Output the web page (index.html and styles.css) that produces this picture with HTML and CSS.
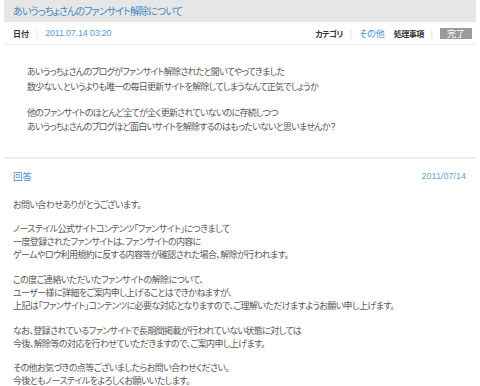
FILE: index.html
```html
<!DOCTYPE html>
<html lang="ja">
<head>
<meta charset="utf-8">
<link rel="stylesheet" href="styles.css">
</head>
<body>
<div class="page">
  <div class="title-bar">あいうっちょさんのファンサイト解除について</div>
  <div class="meta">
    <div class="meta-left">
      <span class="label">日付</span>
      <span class="sep">|</span>
      <span class="date">2011.07.14 03:20</span>
    </div>
    <div class="meta-right">
      <span class="label">カテゴリ</span>
      <span class="sep">|</span>
      <span class="category">その他</span>
      <span class="label">処理事項</span>
      <span class="sep">|</span>
      <span class="badge">完了</span>
    </div>
  </div>
  <div class="question">
    <p>あいうっちょさんのブログがファンサイト解除されたと聞いてやってきました<br>数少ない、というよりも唯一の毎日更新サイトを解除してしまうなんて正気でしょうか</p>
    <p>他のファンサイトのほとんど全てが全く更新されていないのに存続しつつ<br>あいうっちょさんのブログほど面白いサイトを解除するのはもったいないと思いませんか？</p>
  </div>
  <div class="answer">
    <div class="answer-head">
      <span class="answer-label">回答</span>
      <span class="answer-date">2011/07/14</span>
    </div>
    <div class="answer-body">
      <p>お問い合わせありがとうございます。</p>
      <p>ノーステイル公式サイトコンテンツ「ファンサイト」につきまして<br>一度登録されたファンサイトは、ファンサイトの内容に<br>ゲームやロウ利用規約に反する内容等が確認された場合、解除が行われます。</p>
      <p>この度ご連絡いただいたファンサイトの解除について、<br>ユーザー様に詳細をご案内申し上げることはできかねますが、<br>上記は「ファンサイト」コンテンツに必要な対応となりますので、ご理解いただけますようお願い申し上げます。</p>
      <p>なお、登録されているファンサイトで長期間掲載が行われていない状態に対しては<br>今後、解除等の対応を行わせていただきますので、ご案内申し上げます。</p>
      <p>その他お気づきの点等ございましたらお問い合わせください。<br>今後ともノーステイルをよろしくお願いいたします。</p>
    </div>
  </div>
</div>
</body>
</html>
```
FILE: styles.css
```css
html, body {
  margin: 0;
  padding: 0;
  background: #ffffff;
}
body {
  font-family: "Noto Sans CJK JP", "Noto Sans", sans-serif;
  font-feature-settings: "palt";
  color: #585858;
}
.page {
  padding: 0 4px;
}
.title-bar {
  background: #e6e6e6;
  height: 22px;
  line-height: 22px;
  padding-left: 9px;
  font-size: 10px;
  letter-spacing: -0.9px;
  color: #3f89c4;
}
.meta {
  display: flex;
  justify-content: space-between;
  align-items: center;
  height: 22px;
  padding: 0 4px 0 9px;
  border-bottom: 1px solid #ececec;
  font-size: 8px;
}
.meta-left, .meta-right {
  display: flex;
  align-items: center;
}
.label {
  color: #333333;
  font-weight: bold;
}
.meta-right .label {
  letter-spacing: -0.5px;
}
.sep {
  color: #cccccc;
  margin: 0 7px;
  font-size: 8px;
}
.date {
  font-family: "Liberation Sans", sans-serif;
  color: #5e9bcf;
  font-size: 9px;
  letter-spacing: -0.2px;
}
.category {
  color: #4a90cc;
  font-size: 9px;
  margin-right: 9px;
}
.badge {
  background: #9a9a9a;
  color: #ffffff;
  font-size: 9px;
  padding: 0 7px;
  height: 11px;
  line-height: 11px;
}
.question {
  padding: 20px 0 22px 23px;
  border-bottom: 2px solid #eeeeee;
  font-size: 9px;
  letter-spacing: -0.75px;
  line-height: 14.5px;
}
.question p {
  margin: 0 0 11.5px;
}
.answer-body p {
  margin: 0 0 11px;
}
.question p:last-child, .answer-body p:last-child {
  margin-bottom: 0;
}
.answer {
  padding: 9px 4px 0 9px;
}
.answer-head {
  display: flex;
  justify-content: space-between;
  align-items: center;
  height: 16px;
  margin-bottom: 14px;
}
.answer-label {
  color: #4a90cc;
  font-size: 9.5px;
}
.answer-date {
  font-family: "Liberation Sans", sans-serif;
  color: #6a9fcc;
  font-size: 9px;
  margin-right: 6px;
}
.answer-body {
  font-size: 9px;
  letter-spacing: -0.6px;
  line-height: 13.3px;
}
```
